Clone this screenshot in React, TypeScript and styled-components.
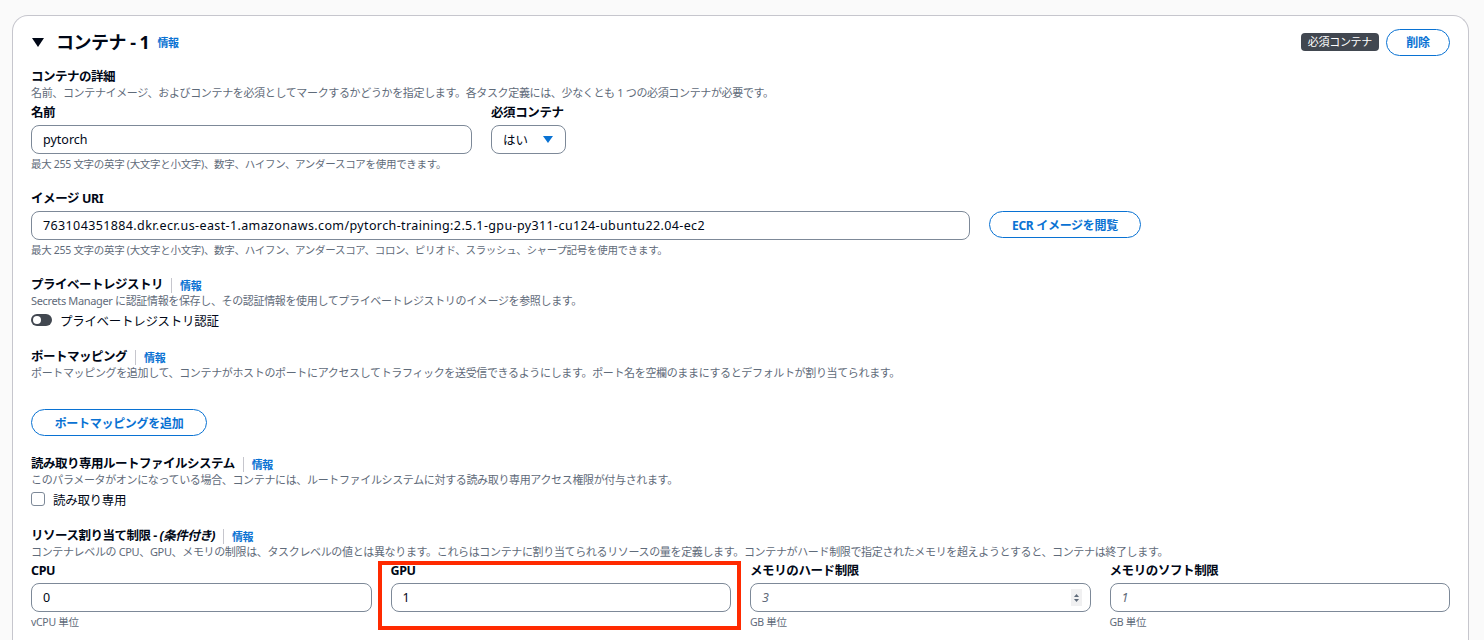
import React from 'react';
import styled, { createGlobalStyle } from 'styled-components';

const GlobalStyle = createGlobalStyle`
  html, body {
    margin: 0;
    padding: 0;
    background: #fafafa;
    font-family: "Noto Sans", "Noto Sans CJK JP", sans-serif;
    color: #000716;
  }
`;

const Card = styled.div`
  margin: 15px 15px 0 12px;
  background: #fff;
  border: 1px solid #c6c6cd;
  border-bottom: none;
  border-radius: 16px 16px 0 0;
  padding: 12px 18px 20px 18px;
  height: 640px;
  box-sizing: border-box;
`;

const Header = styled.div`
  display: flex;
  align-items: center;
  justify-content: space-between;
  height: 28px;
`;

const TitleWrap = styled.div`
  display: flex;
  align-items: center;
`;

const Caret = styled.svg`
  width: 12px;
  height: 9px;
  margin: 0 12px 0 1px;
`;

const Title = styled.h2`
  margin: 0;
  font-size: 18px;
  font-weight: 700;
  letter-spacing: -0.5px;
  line-height: 22px;
`;

const Actions = styled.div`
  display: flex;
  align-items: center;
  gap: 7px;
`;

const Badge = styled.span`
  background: #414750;
  color: #fff;
  font-size: 11px;
  line-height: 18px;
  height: 18px;
  padding: 0 7px;
  border-radius: 4px;
  letter-spacing: -0.3px;
`;

const PillButton = styled.button<{ $w?: number; $mt?: number }>`
  font-family: inherit;
  height: 27px;
  box-sizing: border-box;
  border: 1.5px solid #0972d3;
  border-radius: 20px;
  background: #fff;
  color: #0972d3;
  font-weight: 700;
  font-size: 12px;
  letter-spacing: -0.3px;
  padding: 0 18px;
  width: ${p => (p.$w ? `${p.$w}px` : 'auto')};
  margin-top: ${p => p.$mt ?? 0}px;
  cursor: pointer;
  white-space: nowrap;
  flex-shrink: 0;
`;

const Body = styled.div`
  display: flex;
  flex-direction: column;
  gap: 20px;
  margin-top: 13px;
`;

const Section = styled.div`
  display: flex;
  flex-direction: column;
`;

const HeadingRow = styled.div`
  display: flex;
  align-items: center;
  height: 16px;
`;

const Heading = styled.span`
  font-size: 12.5px;
  font-weight: 700;
  letter-spacing: -0.5px;
  line-height: 16px;
`;

const Italic = styled.i`
  font-weight: 700;
`;

const Sep = styled.span`
  width: 1px;
  height: 15px;
  background: #c6c6cd;
  margin: 0 8px;
`;

const Info = styled.a<{ $ml?: number }>`
  color: #0972d3;
  font-size: 11px;
  font-weight: 700;
  text-decoration: none;
  letter-spacing: -0.3px;
  margin-left: ${p => p.$ml ?? 0}px;
`;

const Desc = styled.div`
  font-size: 11px;
  line-height: 16px;
  color: #5f6b7a;
  letter-spacing: -0.35px;
  white-space: nowrap;
`;

const Row = styled.div<{ $mt?: number }>`
  display: flex;
  gap: 19px;
  align-items: flex-start;
  margin-top: ${p => p.$mt ?? 0}px;
`;

const Grid = styled.div`
  display: grid;
  grid-template-columns: repeat(4, 1fr);
  align-items: start;
  gap: 19px;
  margin-top: 3px;
`;

const Field = styled.div<{ $w?: number }>`
  display: flex;
  flex-direction: column;
  position: relative;
  width: ${p => (p.$w ? `${p.$w}px` : 'auto')};
`;

const Label = styled.label`
  font-size: 12.5px;
  font-weight: 700;
  line-height: 16px;
  letter-spacing: -0.4px;
  margin-bottom: 4px;
`;

const InputBox = styled.div<{ $placeholder?: boolean; $ls?: number }>`
  height: 29px;
  box-sizing: border-box;
  border: 1px solid #7d8998;
  border-radius: 8px;
  display: flex;
  align-items: center;
  justify-content: space-between;
  padding: 0 8px 0 11px;
  font-size: 12.5px;
  letter-spacing: ${p => p.$ls ?? 0}px;
  color: ${p => (p.$placeholder ? '#5f6b7a' : '#000716')};
  font-style: ${p => (p.$placeholder ? 'italic' : 'normal')};
  white-space: nowrap;
  overflow: hidden;
`;

const Helper = styled.div`
  font-size: 10.5px;
  line-height: 14px;
  margin-top: 3px;
  color: #5f6b7a;
  letter-spacing: -0.3px;
  white-space: nowrap;
`;

const Select = styled.div`
  height: 29px;
  width: 75px;
  box-sizing: border-box;
  border: 1px solid #7d8998;
  border-radius: 8px;
  display: flex;
  align-items: center;
  padding: 0 12px 0 11px;
  gap: 15px;
  font-size: 12.5px;
  white-space: nowrap;
`;

const Spinner = styled.div`
  width: 11px;
  height: 17px;
  background: #f0f0f1;
  display: flex;
  flex-direction: column;
  align-items: center;
  justify-content: center;
  gap: 2px;
`;

const CheckRow = styled.div`
  display: flex;
  align-items: center;
  gap: 8px;
  height: 18px;
  margin-top: 2px;
  font-size: 12.5px;
  letter-spacing: -0.3px;
`;

const Toggle = styled.span`
  width: 21px;
  height: 12px;
  border-radius: 6px;
  background: #414750;
  position: relative;
  &::after {
    content: '';
    position: absolute;
    left: 2px;
    top: 2px;
    width: 8px;
    height: 8px;
    border-radius: 50%;
    background: #fff;
  }
`;

const Checkbox = styled.span`
  width: 14px;
  height: 14px;
  box-sizing: border-box;
  border: 1px solid #7d8998;
  border-radius: 3px;
`;

const Highlight = styled.div`
  position: absolute;
  left: -13px;
  right: -10px;
  top: -2px;
  bottom: -18px;
  border: 4px solid #ff2a00;
  pointer-events: none;
`;

const Tri = ({ color }: { color: string }) => (
  <svg width="10" height="7" viewBox="0 0 10 7">
    <path d="M0 0h10L5 7z" fill={color} />
  </svg>
);

const Heads = ({ title, info }: { title: React.ReactNode; info?: boolean }) => (
  <HeadingRow>
    <Heading>{title}</Heading>
    {info && (
      <>
        <Sep />
        <Info href="#">情報</Info>
      </>
    )}
  </HeadingRow>
);

export default function App() {
  return (
    <>
      <GlobalStyle />
      <Card>
        <Header>
          <TitleWrap>
            <Caret viewBox="0 0 12 9">
              <path d="M0 0h12L6 9z" fill="#000716" />
            </Caret>
            <Title>コンテナ - 1</Title>
            <Info href="#" $ml={8}>情報</Info>
          </TitleWrap>
          <Actions>
            <Badge>必須コンテナ</Badge>
            <PillButton $w={64}>削除</PillButton>
          </Actions>
        </Header>

        <Body>
          <Section>
            <Heads title="コンテナの詳細" />
            <Desc>名前、コンテナイメージ、およびコンテナを必須としてマークするかどうかを指定します。各タスク定義には、少なくとも 1 つの必須コンテナが必要です。</Desc>
            <Row $mt={4}>
              <Field $w={441}>
                <Label>名前</Label>
                <InputBox>pytorch</InputBox>
                <Helper>最大 255 文字の英字 (大文字と小文字)、数字、ハイフン、アンダースコアを使用できます。</Helper>
              </Field>
              <Field>
                <Label>必須コンテナ</Label>
                <Select>
                  はい
                  <Tri color="#0972d3" />
                </Select>
              </Field>
            </Row>
          </Section>

          <Section>
            <Row>
              <Field $w={939}>
                <Label>イメージ URI</Label>
                <InputBox $ls={0.38}>763104351884.dkr.ecr.us-east-1.amazonaws.com/pytorch-training:2.5.1-gpu-py311-cu124-ubuntu22.04-ec2</InputBox>
                <Helper>最大 255 文字の英字 (大文字と小文字)、数字、ハイフン、アンダースコア、コロン、ピリオド、スラッシュ、シャープ記号を使用できます。</Helper>
              </Field>
              <PillButton $w={152} $mt={20}>ECR イメージを閲覧</PillButton>
            </Row>
          </Section>

          <Section>
            <Heads title="プライベートレジストリ" info />
            <Desc>Secrets Manager に認証情報を保存し、その認証情報を使用してプライベートレジストリのイメージを参照します。</Desc>
            <CheckRow>
              <Toggle />
              プライベートレジストリ認証
            </CheckRow>
          </Section>

          <Section>
            <Heads title="ポートマッピング" info />
            <Desc>ポートマッピングを追加して、コンテナがホストのポートにアクセスしてトラフィックを送受信できるようにします。ポート名を空欄のままにするとデフォルトが割り当てられます。</Desc>
            <Row $mt={28}>
              <PillButton $w={176}>ポートマッピングを追加</PillButton>
            </Row>
          </Section>

          <Section>
            <Heads title="読み取り専用ルートファイルシステム" info />
            <Desc>このパラメータがオンになっている場合、コンテナには、ルートファイルシステムに対する読み取り専用アクセス権限が付与されます。</Desc>
            <CheckRow>
              <Checkbox />
              読み取り専用
            </CheckRow>
          </Section>

          <Section>
            <Heads title={<>リソース割り当て制限 - <Italic>(条件付き)</Italic></>} info />
            <Desc>コンテナレベルの CPU、GPU、メモリの制限は、タスクレベルの値とは異なります。これらはコンテナに割り当てられるリソースの量を定義します。コンテナがハード制限で指定されたメモリを超えようとすると、コンテナは終了します。</Desc>
            <Grid>
              <Field>
                <Label>CPU</Label>
                <InputBox>0</InputBox>
                <Helper>vCPU 単位</Helper>
              </Field>
              <Field>
                <Highlight />
                <Label>GPU</Label>
                <InputBox>1</InputBox>
              </Field>
              <Field>
                <Label>メモリのハード制限</Label>
                <InputBox $placeholder>
                  3
                  <Spinner>
                    <svg width="5" height="3" viewBox="0 0 5 3"><path d="M0 3h5L2.5 0z" fill="#5f6b7a" /></svg>
                    <svg width="5" height="3" viewBox="0 0 5 3"><path d="M0 0h5L2.5 3z" fill="#5f6b7a" /></svg>
                  </Spinner>
                </InputBox>
                <Helper>GB 単位</Helper>
              </Field>
              <Field>
                <Label>メモリのソフト制限</Label>
                <InputBox $placeholder>1</InputBox>
                <Helper>GB 単位</Helper>
              </Field>
            </Grid>
          </Section>
        </Body>
      </Card>
    </>
  );
}
